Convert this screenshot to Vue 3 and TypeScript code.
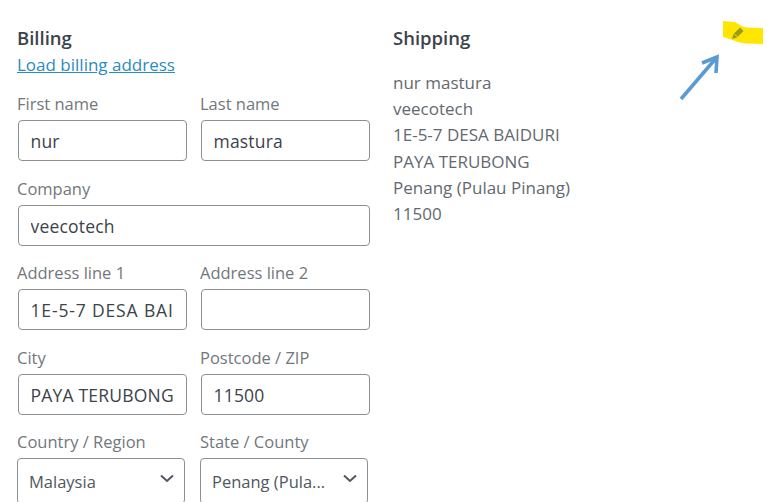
<script setup lang="ts">
interface Field { label: string; value: string; wide?: boolean; select?: boolean; spaced?: boolean; }
const fields: Field[] = [
  { label: 'First name', value: 'nur' },
  { label: 'Last name', value: 'mastura' },
  { label: 'Company', value: 'veecotech', wide: true },
  { label: 'Address line 1', value: '1E-5-7 DESA BAIDURI', spaced: true },
  { label: 'Address line 2', value: '' },
  { label: 'City', value: 'PAYA TERUBONG' },
  { label: 'Postcode / ZIP', value: '11500' },
  { label: 'Country / Region', value: 'Malaysia', select: true },
  { label: 'State / County', value: 'Penang (Pula...', select: true },
];
const shipping = ['nur mastura', 'veecotech', '1E-5-7 DESA BAIDURI', 'PAYA TERUBONG', 'Penang (Pulau Pinang)', '11500'];
</script>

<template>
  <div class="page">
    <section class="billing">
      <h3 class="title">Billing</h3>
      <a class="load">Load billing address</a>
      <div class="grid">
        <div v-for="f in fields" :key="f.label" class="field" :class="{ wide: f.wide, sel: f.select }">
          <label class="lab">{{ f.label }}</label>
          <div v-if="f.select" class="select">
            <span>{{ f.value }}</span>
            <svg class="chev" width="14" height="9" viewBox="0 0 14 9"><path d="M1 1.5 7 7l6-5.5" fill="none" stroke="#50575e" stroke-width="2"/></svg>
          </div>
          <div v-else class="input"><span class="val" :class="{ spaced: f.spaced }">{{ f.value }}</span></div>
        </div>
      </div>
    </section>
    <section class="shipping">
      <h3 class="title">Shipping</h3>
      <div class="addr">
        <div v-for="l in shipping" :key="l">{{ l }}</div>
      </div>
    </section>
    <svg class="mark" width="42" height="25" viewBox="0 0 42 25">
      <path d="M1 1 L13 2 C17 4 20 7 24 7.5 L41 8 L41 24 L24 23.5 C18 23 14 21 9 19.5 L1 17 Z" fill="#ffe600"/>
      <path d="M10 19 L11.5 14 L18 7.5 L21.5 11 L15 17.5 Z" fill="#9a9a1c"/>
      <path d="M12.5 14 L15.5 17" stroke="#ffe600" stroke-width="1" fill="none"/>
    </svg>
    <svg class="arrow" width="46" height="60" viewBox="0 0 46 60">
      <path d="M3 52 L39 10" stroke="#5b9bd5" stroke-width="3.6" fill="none"/>
      <path d="M24 16 L39 10 L38 26" stroke="#5b9bd5" stroke-width="3.6" fill="none"/>
    </svg>
  </div>
</template>

<style>
html, body { margin: 0; background: #fff; overflow: hidden; }
</style>

<style scoped>
.page {
  position: relative;
  width: 767px;
  height: 502px;
  overflow: hidden;
  display: flex;
  padding: 26px 0 0 17px;
  box-sizing: border-box;
  font-family: "Open Sans", "Noto Sans", sans-serif;
  font-size: 17.5px;
  color: #50575e;
}
.billing { width: 353px; flex: none; }
.shipping { margin-left: 23px; }
.title {
  margin: 0;
  height: 24px;
  line-height: 24px;
  font-size: 18.5px;
  font-weight: 600;
  color: #3c434a;
}
.load {
  display: block;
  width: max-content;
  height: 27px;
  line-height: 29px;
  font-size: 17px;
  color: #2a8bc0;
  text-decoration: underline;
}
.grid {
  margin-top: 16px;
  display: grid;
  grid-template-columns: 169px 169px;
  column-gap: 14px;
  grid-auto-rows: 84.5px;
}
.wide { grid-column: 1 / 3; }
.lab {
  display: block;
  height: 23px;
  margin-bottom: 4px;
  line-height: 21px;
  color: #72777c;
  font-size: 16.5px;
  white-space: nowrap;
}
.input, .select {
  height: 41px;
  box-sizing: border-box;
  border: 1.5px solid #8c8f94;
  border-radius: 4px;
  line-height: 40px;
  color: #3c434a;
  white-space: nowrap;
  background: #fff;
}
.input { margin: 0 -1px 0 1px; padding: 0 11px 0 11.5px; letter-spacing: 0.2px; }
.val { display: block; overflow: hidden; }
.spaced { letter-spacing: 0.85px; }
.select {
  position: relative;
  margin-right: 1px;
  padding: 0 11px;
  height: 46px;
  line-height: 46px;
  font-size: 16.5px;
  color: #50575e;
}
.chev { position: absolute; right: 10px; top: 15px; }
.addr { margin-top: 20px; line-height: 26.2px; color: #646970; font-size: 17px; }
.mark { position: absolute; left: 722px; top: 20px; }
.arrow { position: absolute; left: 678px; top: 47px; }
</style>
